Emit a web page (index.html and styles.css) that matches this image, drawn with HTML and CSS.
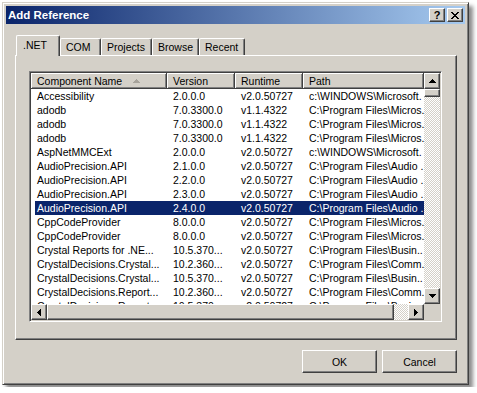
FILE: index.html
```html
<!DOCTYPE html>
<html lang="en">
<head>
    <meta charset="UTF-8">
    <meta name="viewport" content="width=device-width, initial-scale=1.0">
    <title>Add Reference</title>
    <link rel="stylesheet" href="styles.css">
</head>
<body>
    <div class="window">
        <div class="titlebar">
            <span class="title">Add Reference</span>
            <div class="caption-buttons">
                <button class="caption-btn">?</button>
                <button class="caption-btn">
                    <svg width="8" height="7" viewBox="0 0 8 7" shape-rendering="crispEdges">
                        <path d="M0 0h2v1h1v1h2V1h1V0h2v1H7v1H6v1H5v1h1v1h1v1h1v1H6V6H5V5H3v1H2v1H0V6h1V5h1V4h1V3H2V2H1V1H0z" fill="#000"/>
                    </svg>
                </button>
            </div>
        </div>

        <div class="content">
            <div class="tabs">
                <div class="tab active tab-net">.NET</div>
                <div class="tab tab-com">COM</div>
                <div class="tab tab-projects">Projects</div>
                <div class="tab tab-browse">Browse</div>
                <div class="tab tab-recent">Recent</div>
            </div>

            <div class="panel">
                <div class="listview">
                    <div class="list-main">
                        <div class="list-header">
                            <div class="col-head">Component Name
                                <svg class="sort-arrow" width="7" height="4" viewBox="0 0 7 4" shape-rendering="crispEdges">
                                    <path d="M3 0h1v1h1v1h1v1h1v1H0V3h1V2h1V1h1z" fill="#a7a39b"/>
                                </svg>
                            </div>
                            <div class="col-head">Version</div>
                            <div class="col-head">Runtime</div>
                            <div class="col-head">Path</div>
                        </div>
                        <div class="list-rows">
                            <div class="row"><span>Accessibility</span><span>2.0.0.0</span><span>v2.0.50727</span><span>c:\WINDOWS\Microsoft.</span></div>
                            <div class="row"><span>adodb</span><span>7.0.3300.0</span><span>v1.1.4322</span><span>C:\Program Files\Micros.</span></div>
                            <div class="row"><span>adodb</span><span>7.0.3300.0</span><span>v1.1.4322</span><span>C:\Program Files\Micros.</span></div>
                            <div class="row"><span>adodb</span><span>7.0.3300.0</span><span>v1.1.4322</span><span>C:\Program Files\Micros.</span></div>
                            <div class="row"><span>AspNetMMCExt</span><span>2.0.0.0</span><span>v2.0.50727</span><span>c:\WINDOWS\Microsoft.</span></div>
                            <div class="row"><span>AudioPrecision.API</span><span>2.1.0.0</span><span>v2.0.50727</span><span>C:\Program Files\Audio .</span></div>
                            <div class="row"><span>AudioPrecision.API</span><span>2.2.0.0</span><span>v2.0.50727</span><span>C:\Program Files\Audio .</span></div>
                            <div class="row"><span>AudioPrecision.API</span><span>2.3.0.0</span><span>v2.0.50727</span><span>C:\Program Files\Audio .</span></div>
                            <div class="row selected"><span>AudioPrecision.API</span><span>2.4.0.0</span><span>v2.0.50727</span><span>C:\Program Files\Audio .</span></div>
                            <div class="row"><span>CppCodeProvider</span><span>8.0.0.0</span><span>v2.0.50727</span><span>C:\Program Files\Micros.</span></div>
                            <div class="row"><span>CppCodeProvider</span><span>8.0.0.0</span><span>v2.0.50727</span><span>C:\Program Files\Micros.</span></div>
                            <div class="row"><span>Crystal Reports for .NE...</span><span>10.5.370...</span><span>v2.0.50727</span><span>C:\Program Files\Busin..</span></div>
                            <div class="row"><span>CrystalDecisions.Crystal...</span><span>10.2.360...</span><span>v2.0.50727</span><span>C:\Program Files\Comm.</span></div>
                            <div class="row"><span>CrystalDecisions.Crystal...</span><span>10.5.370...</span><span>v2.0.50727</span><span>C:\Program Files\Busin..</span></div>
                            <div class="row"><span>CrystalDecisions.Report...</span><span>10.2.360...</span><span>v2.0.50727</span><span>C:\Program Files\Comm.</span></div>
                            <div class="row"><span>CrystalDecisions.Report...</span><span>10.5.370...</span><span>v2.0.50727</span><span>C:\Program Files\Busin..</span></div>
                        </div>
                    </div>

                    <div class="vscroll">
                        <div class="scroll-btn">
                            <svg width="7" height="4" viewBox="0 0 7 4" shape-rendering="crispEdges"><path d="M3 0h1v1h1v1h1v1h1v1H0V3h1V2h1V1h1z"/></svg>
                        </div>
                        <div class="thumb thumb-v"></div>
                        <div class="track"></div>
                        <div class="scroll-btn">
                            <svg width="7" height="4" viewBox="0 0 7 4" shape-rendering="crispEdges"><path d="M0 0h7v1H6v1H5v1H4v1H3V3H2V2H1V1H0z"/></svg>
                        </div>
                    </div>

                    <div class="hscroll">
                        <div class="scroll-btn">
                            <svg width="4" height="7" viewBox="0 0 4 7" shape-rendering="crispEdges"><path d="M3 0h1v7H3V6H2V5H1V4H0V3h1V2h1V1h1z"/></svg>
                        </div>
                        <div class="thumb thumb-h"></div>
                        <div class="track"></div>
                        <div class="scroll-btn">
                            <svg width="4" height="7" viewBox="0 0 4 7" shape-rendering="crispEdges"><path d="M0 0h1v1h1v1h1v1h1v1H3v1H2v1H1v1H0z"/></svg>
                        </div>
                    </div>

                    <div class="corner"></div>
                </div>
            </div>

            <div class="footer">
                <button class="btn">OK</button>
                <button class="btn">Cancel</button>
            </div>
        </div>
    </div>
</body>
</html>
```

FILE: styles.css
```css
* {
    margin: 0;
    padding: 0;
    box-sizing: border-box;
}

body {
    background: #fff;
    padding: 2px;
    font-family: 'Liberation Sans', Arial, sans-serif;
    font-size: 10.5px;
    color: #000;
}

button {
    font-family: inherit;
    font-size: inherit;
    color: #000;
    background: #d4d0c8;
}

/* window frame */

.window {
    width: 467px;
    height: 383px;
    background: #d4d0c8;
    border: 1px solid;
    border-color: #d4d0c8 #404040 #404040 #d4d0c8;
    box-shadow: inset 1px 1px #fff, inset -1px -1px #808080, 4px 4px 4px rgba(0, 0, 0, 0.45);
    padding: 3px;
    display: flex;
    flex-direction: column;
}

.titlebar {
    height: 18px;
    display: flex;
    align-items: center;
    padding: 0 2px;
    background: linear-gradient(to right, #0a246a, #a6caf0);
    color: #fff;
}

.title {
    font-weight: bold;
    font-size: 11.5px;
}

.caption-buttons {
    margin-left: auto;
    display: flex;
    gap: 2px;
}

.caption-btn,
.scroll-btn,
.thumb,
.btn {
    background: #d4d0c8;
    border: 1px solid;
    border-color: #fff #404040 #404040 #fff;
    box-shadow: inset -1px -1px #808080, inset 1px 1px #d4d0c8;
}

.caption-btn {
    width: 16px;
    height: 14px;
    display: flex;
    align-items: center;
    justify-content: center;
    font-weight: bold;
    font-size: 11px;
    line-height: 1;
}

/* dialog body */

.content {
    flex: 1;
    padding: 11px 8px 8px 9px;
    display: flex;
    flex-direction: column;
}

.tabs {
    display: flex;
    align-items: flex-end;
    height: 20px;
    padding-left: 1px;
}

.tab {
    height: 17px;
    display: flex;
    align-items: center;
    padding-left: 5px;
    border-left: 1px solid #fff;
    border-top: 1px solid #fff;
    border-right: 1px solid #404040;
    border-radius: 2px 2px 0 0;
    box-shadow: inset -1px 0 #808080;
}

.tab.active {
    height: 21px;
    margin-bottom: -1px;
    padding-left: 6px;
    padding-bottom: 3px;
    position: relative;
    z-index: 1;
    background: #d4d0c8;
}

.tab-net { width: 44px; }
.tab-com { width: 41px; }
.tab-projects { width: 51px; }
.tab-browse { width: 47px; }
.tab-recent { width: 46px; }

.panel {
    height: 285px;
    border: 1px solid;
    border-color: #fff #404040 #404040 #fff;
    box-shadow: inset -1px -1px #808080;
    padding: 15px 14px 17px 13px;
}

/* list view */

.listview {
    width: 413px;
    height: 251px;
    background: #fff;
    border: 1px solid;
    border-color: #808080 #fff #fff #808080;
    box-shadow: inset 1px 1px #404040, inset -1px -1px #d4d0c8;
    padding: 1px;
    display: grid;
    grid-template-columns: 393px 16px;
    grid-template-rows: 231px 16px;
}

.list-main {
    overflow: hidden;
}

.list-header {
    display: grid;
    grid-template-columns: 136px 68px 68px 121px;
    height: 16px;
}

.col-head {
    display: flex;
    align-items: center;
    padding-left: 6px;
    background: #d4d0c8;
    border-right: 1px solid #404040;
    border-bottom: 1px solid #404040;
    box-shadow: inset 1px 1px #fff, inset -1px -1px #808080;
    white-space: nowrap;
    overflow: hidden;
}

.sort-arrow {
    margin-left: 11px;
}

.list-rows {
    height: 215px;
    overflow: hidden;
}

.row {
    display: grid;
    grid-template-columns: 132px 68px 68px 121px;
    margin-left: 4px;
    height: 14px;
    line-height: 14px;
}

.row span {
    padding-left: 6px;
    white-space: nowrap;
    overflow: hidden;
}

.row span:first-child {
    padding-left: 2px;
}

.row.selected {
    background: #0a246a;
    color: #fff;
}

/* scroll bars */

.vscroll,
.hscroll {
    display: flex;
}

.vscroll {
    flex-direction: column;
}

.scroll-btn {
    width: 16px;
    height: 16px;
    flex: none;
    display: flex;
    align-items: center;
    justify-content: center;
}

.track {
    flex: 1;
    background: repeating-conic-gradient(#fff 0 25%, #d4d0c8 0 50%) 0 0 / 2px 2px;
}

.thumb {
    flex: none;
}

.thumb-v {
    height: 8px;
}

.thumb-h {
    width: 347px;
}

.corner {
    background: #d4d0c8;
}

/* footer buttons */

.footer {
    display: flex;
    justify-content: flex-end;
    gap: 5px;
    margin-top: 10px;
}

.btn {
    width: 75px;
    height: 23px;
}
```
